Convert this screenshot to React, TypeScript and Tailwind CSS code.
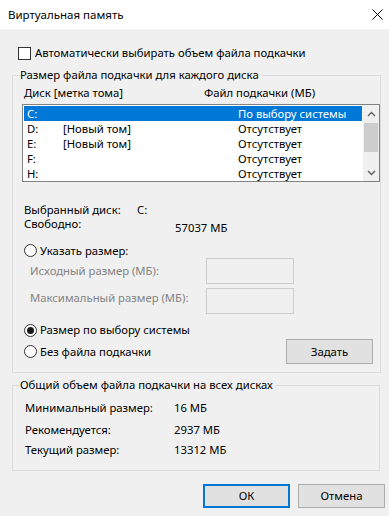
const font = { fontFamily: '"Noto Sans", "Liberation Sans", sans-serif' };

type Drive = { letter: string; label: string; size: string };

const drives: Drive[] = [
  { letter: "C:", label: "", size: "По выбору системы" },
  { letter: "D:", label: "[Новый том]", size: "Отсутствует" },
  { letter: "E:", label: "[Новый том]", size: "Отсутствует" },
  { letter: "F:", label: "", size: "Отсутствует" },
  { letter: "H:", label: "", size: "Отсутствует" },
];

function Radio({ checked = false }: { checked?: boolean }) {
  return (
    <span className="flex h-[13px] w-[13px] shrink-0 items-center justify-center rounded-full border border-[#333333] bg-white">
      {checked && <span className="h-[7px] w-[7px] rounded-full bg-[#1a1a1a]" />}
    </span>
  );
}

function Chevron({ up }: { up: boolean }) {
  return (
    <svg width="9" height="6" viewBox="0 0 9 6">
      <path d={up ? "M1 5 L4.5 1.5 L8 5" : "M1 1 L4.5 4.5 L8 1"} fill="none" stroke="#606060" strokeWidth="1.4" />
    </svg>
  );
}

function DriveList() {
  return (
    <div className="ml-[2px] mt-[3px] flex h-[78px] w-[358px] border border-[#828282] bg-white pl-[1px] pt-[1px]">
      <div className="w-[338px]">
        {drives.map((d, i) => (
          <div
            key={d.letter}
            className={`flex h-[15px] items-center leading-[15px] ${i === 0 ? "bg-[#0078d7] text-white" : "text-black"}`}
          >
            <span className="w-[39px] pl-[3px]">{d.letter}</span>
            <span className="w-[175px]">{d.label}</span>
            <span>{d.size}</span>
          </div>
        ))}
      </div>
      <div className="ml-[1px] -mt-[1px] flex h-[76px] w-[16px] flex-col bg-[#f0f0f0]">
        <div className="flex h-[17px] items-center justify-center">
          <Chevron up />
        </div>
        <div className="mx-[1px] mt-[1px] h-[29px] bg-[#cdcdcd]" />
        <div className="flex-1" />
        <div className="flex h-[17px] items-center justify-center">
          <Chevron up={false} />
        </div>
      </div>
    </div>
  );
}

function SizeInput() {
  return <div className="h-[26px] w-[88px] border border-[#cccccc] bg-[#f0f0f0]" />;
}

export default function App() {
  return (
    <div className="flex h-[516px] w-[389px] flex-col bg-[#f0f0f0] text-[11.3px] text-black" style={font}>
      <div className="flex h-[29px] items-center justify-between bg-white pl-[8px] pr-[5px]">
        <span className="text-[11.5px] leading-[16px]">Виртуальная память</span>
        <svg width="11" height="11" viewBox="0 0 11 11" className="mr-[1px]">
          <path d="M0.5 0.5 L10.5 10.5 M10.5 0.5 L0.5 10.5" stroke="#000" strokeWidth="1" />
        </svg>
      </div>

      <div className="ml-[18px] mt-[16px] flex h-[16px] items-center gap-[4px] leading-[16px]">
        <span className="h-[13px] w-[13px] border border-[#333333] bg-white" />
        <span>Автоматически выбирать объем файла подкачки</span>
      </div>

      <fieldset className="ml-[12px] mt-[6px] w-[368px] border border-[#dcdcdc] pb-[8px] pl-[7px]">
        <legend className="pr-[2px] leading-[16px]">Размер файла подкачки для каждого диска</legend>
        <div className="ml-[4px] mt-[2px] flex h-[16px] leading-[16px]">
          <span className="w-[180px]">Диск [метка тома]</span>
          <span>Файл подкачки (МБ)</span>
        </div>
        <DriveList />

        <div className="ml-[4px] mt-[21px] flex h-[14px] items-center leading-[14px]">
          <span className="w-[113px]">Выбранный диск:</span>
          <span>C:</span>
        </div>
        <div className="ml-[4px] flex h-[14px] items-start leading-[14px]">
          <span className="w-[151px]">Свободно:</span>
          <span className="mt-[4px]">57037 МБ</span>
        </div>

        <div className="ml-[4px] mt-[12px] flex h-[15px] items-center gap-[3px] leading-[16px]">
          <Radio />
          <span>Указать размер:</span>
        </div>
        <div className="ml-[10px] flex h-[26px] items-start leading-[16px] text-[#838383]">
          <span className="mt-[5px] w-[176px]">Исходный размер (МБ):</span>
          <SizeInput />
        </div>
        <div className="ml-[10px] mt-[4px] flex h-[26px] items-start leading-[16px] text-[#838383]">
          <span className="mt-[2px] w-[176px]">Максимальный размер (МБ):</span>
          <SizeInput />
        </div>

        <div className="ml-[4px] mt-[8px] flex h-[16px] items-center gap-[3px] leading-[16px]">
          <Radio checked />
          <span>Размер по выбору системы</span>
        </div>
        <div className="ml-[4px] mt-[1px] flex h-[25px] items-center leading-[16px]">
          <Radio />
          <span className="ml-[3px]">Без файла подкачки</span>
          <button className="ml-auto mr-[7px] h-[25px] w-[87px] border border-[#adadad] bg-[#e1e1e1]">Задать</button>
        </div>
      </fieldset>

      <fieldset className="ml-[12px] mt-[4px] w-[368px] border border-[#dcdcdc] pb-[12px] pl-[7px]">
        <legend className="pr-[2px] leading-[16px]">Общий объем файла подкачки на всех дисках</legend>
        <div className="ml-[5px] mt-[7px] flex h-[16px] leading-[16px]">
          <span className="w-[149px]">Минимальный размер:</span>
          <span>16 МБ</span>
        </div>
        <div className="ml-[5px] mt-[6px] flex h-[16px] leading-[16px]">
          <span className="w-[149px]">Рекомендуется:</span>
          <span>2937 МБ</span>
        </div>
        <div className="ml-[5px] mt-[4px] flex h-[16px] leading-[16px]">
          <span className="w-[149px]">Текущий размер:</span>
          <span>13312 МБ</span>
        </div>
      </fieldset>

      <div className="mt-[13px] flex justify-end gap-[8px] pr-[4px]">
        <button className="h-[24px] w-[87px] border-2 border-[#0078d7] bg-[#e1e1e1]">ОК</button>
        <button className="h-[24px] w-[87px] border border-[#adadad] bg-[#e1e1e1]">Отмена</button>
      </div>
    </div>
  );
}
